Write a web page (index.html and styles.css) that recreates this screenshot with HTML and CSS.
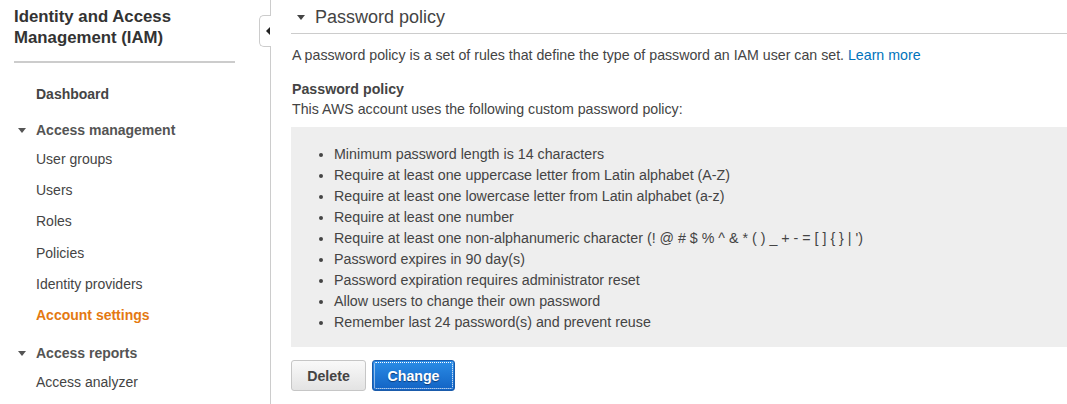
FILE: index.html
```html
<!DOCTYPE html>
<html lang="en">
<head>
<meta charset="utf-8">
<title>IAM - Account settings</title>
<link rel="stylesheet" href="styles.css">
</head>
<body>
<div class="layout">
  <aside class="sidebar">
    <h1 class="brand">Identity and Access Management (IAM)</h1>
    <hr class="rule">
    <nav class="nav">
      <a class="nav-top">Dashboard</a>
      <div class="section">
        <div class="section-head"><span class="caret"></span>Access management</div>
        <a class="item">User groups</a>
        <a class="item">Users</a>
        <a class="item">Roles</a>
        <a class="item">Policies</a>
        <a class="item">Identity providers</a>
        <a class="item active">Account settings</a>
      </div>
      <div class="section">
        <div class="section-head"><span class="caret"></span>Access reports</div>
        <a class="item">Access analyzer</a>
      </div>
    </nav>
    <div class="collapse-tab"><span class="tab-arrow"></span></div>
  </aside>
  <main class="main">
    <h2 class="panel-title"><span class="title-caret"></span>Password policy</h2>
    <p class="intro">A password policy is a set of rules that define the type of password an IAM user can set. <a class="link">Learn more</a></p>
    <h3 class="sub">Password policy</h3>
    <p class="desc">This AWS account uses the following custom password policy:</p>
    <div class="policy-box">
      <ul class="policy-list">
        <li>Minimum password length is 14 characters</li>
        <li>Require at least one uppercase letter from Latin alphabet (A-Z)</li>
        <li>Require at least one lowercase letter from Latin alphabet (a-z)</li>
        <li>Require at least one number</li>
        <li>Require at least one non-alphanumeric character (! @ # $ % ^ &amp; * ( ) _ + - = [ ] { } | ')</li>
        <li>Password expires in 90 day(s)</li>
        <li>Password expiration requires administrator reset</li>
        <li>Allow users to change their own password</li>
        <li>Remember last 24 password(s) and prevent reuse</li>
      </ul>
    </div>
    <div class="actions">
      <button class="btn btn-default">Delete</button>
      <button class="btn btn-primary"><span class="focus-ring">Change</span></button>
    </div>
  </main>
</div>
</body>
</html>
```

FILE: styles.css
```css
html, body {
  margin: 0;
  padding: 0;
  background: #ffffff;
  font-family: "Liberation Sans", Arial, sans-serif;
  color: #444444;
}

.layout {
  display: flex;
  min-height: 404px;
}

.sidebar {
  position: relative;
  width: 271px;
  flex: 0 0 271px;
  border-right: 1px solid #cccccc;
  padding: 6px 35px 0 14px;
  box-sizing: border-box;
}

.brand {
  margin: 0;
  font-size: 16.8px;
  line-height: 21px;
  font-weight: bold;
  color: #333333;
}

.rule {
  margin: 13px 0 0;
  border: 0;
  border-top: 2px solid #cccccc;
  height: 0;
}

.nav {
  display: flex;
  flex-direction: column;
  padding-top: 19px;
}

.nav-top {
  display: block;
  padding-left: 22px;
  line-height: 24px;
  font-size: 14px;
  font-weight: bold;
  color: #444444;
}

.section {
  display: flex;
  flex-direction: column;
  margin-top: 10px;
}

.section + .section {
  margin-top: 8px;
}

.section-head {
  display: flex;
  align-items: center;
  line-height: 28px;
  font-size: 14px;
  font-weight: bold;
  color: #545454;
}

.caret {
  width: 0;
  height: 0;
  margin: 1px 10px 0 4px;
  border-left: 4px solid transparent;
  border-right: 4px solid transparent;
  border-top: 5px solid #555555;
}

.item {
  display: block;
  padding-left: 22px;
  line-height: 31.2px;
  font-size: 14px;
  color: #444444;
}

.item.active {
  color: #e47911;
  font-weight: bold;
}

.collapse-tab {
  position: absolute;
  top: 15px;
  right: -1px;
  width: 12px;
  height: 32px;
  box-sizing: border-box;
  background: #ffffff;
  border: 1px solid #cccccc;
  border-right: 0;
  border-radius: 5px 0 0 5px;
  display: flex;
  align-items: center;
  justify-content: flex-end;
  padding-right: 1px;
}

.tab-arrow {
  width: 0;
  height: 0;
  border-top: 4px solid transparent;
  border-bottom: 4px solid transparent;
  border-right: 4px solid #222222;
}

.main {
  flex: 1;
  padding-left: 20px;
  min-width: 0;
}

.panel-title {
  display: flex;
  align-items: center;
  margin: 0;
  padding: 4px 0 3px;
  line-height: 26px;
  font-size: 18px;
  font-weight: normal;
  color: #444444;
  border-bottom: 1px solid #cccccc;
}

.title-caret {
  width: 0;
  height: 0;
  margin: 0 10px 0 6px;
  border-left: 4px solid transparent;
  border-right: 4px solid transparent;
  border-top: 5px solid #444444;
}

.intro {
  margin: 11px 0 0 1px;
  font-size: 14.2px;
  line-height: 20px;
}

.link {
  color: #0073bb;
}

.sub {
  margin: 14px 0 0 1px;
  font-size: 14.2px;
  line-height: 20px;
  font-weight: bold;
  color: #444444;
}

.desc {
  margin: 0 0 0 1px;
  font-size: 14.2px;
  line-height: 20px;
}

.policy-box {
  margin-top: 8px;
  background: #eeeeee;
  padding: 17px 0 14px 2px;
}

.policy-list {
  margin: 0;
  padding-left: 41px;
  font-size: 14.25px;
  line-height: 21px;
  color: #444444;
}

.actions {
  display: flex;
  gap: 6px;
  margin-top: 13px;
}

.btn {
  height: 31px;
  box-sizing: border-box;
  font-family: "Liberation Sans", Arial, sans-serif;
  font-size: 14.2px;
  font-weight: bold;
  border-radius: 3px;
  cursor: pointer;
}

.btn-default {
  width: 75px;
  padding: 0;
  color: #444444;
  background: linear-gradient(#f9f9f9, #e3e3e3);
  border: 1px solid #c6c6c6;
}

.btn-primary {
  width: 83px;
  padding: 1px;
  color: #ffffff;
  background: linear-gradient(#2a8ce6, #1263c4);
  border: 1px solid #1a5bab;
  text-shadow: 0 1px 1px #0a3a78;
}

.focus-ring {
  display: flex;
  align-items: center;
  justify-content: center;
  height: 100%;
  border: 1px dotted #ffffff;
  border-radius: 2px;
  box-sizing: border-box;
}
```
